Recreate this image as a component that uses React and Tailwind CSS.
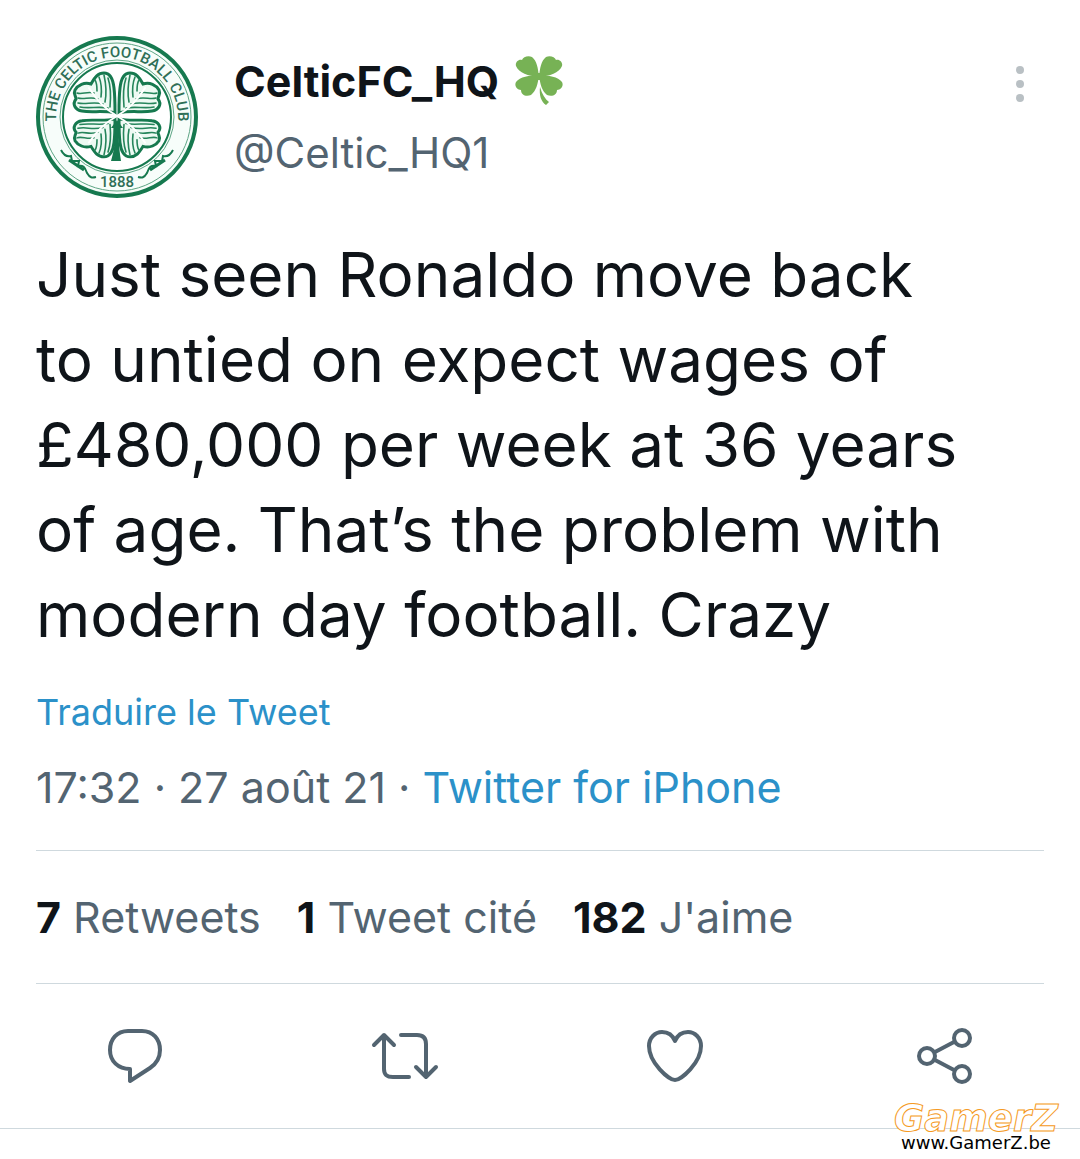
const INK = "#536471";

const stats = [
  { count: "7", label: "Retweets" },
  { count: "1", label: "Tweet cité" },
  { count: "182", label: "J'aime" },
];

function Leaf({ transform }) {
  return (
    <g transform={transform} strokeLinecap="round">
      <path
        d="M2 -3 C2 -12 2 -20 3 -28 C4 -37 7 -43 13 -43 C19 -43 22 -39 26 -32 C33 -34 39 -31 42 -26 C44 -22 41 -20 41 -17 C45 -12 42 -6 35 -5 C25 -3 14 -6 2 -3 Z"
        fill="#edfaf3"
        stroke="#16794f"
        strokeWidth="3"
      />
      <g fill="none" stroke="#25855b" strokeWidth="1.6">
        <path d="M7 -9 C6 -20 6 -29 9 -38" />
        <path d="M12 -14 C10 -24 11 -32 13 -41" />
        <path d="M16 -19 C15 -27 16 -34 18 -39" />
        <path d="M20 -25 C20 -30 20 -33 22 -36" />
        <path d="M9 -8 C19 -10 28 -7 37 -9" />
        <path d="M14 -12 C24 -15 31 -11 39 -13" />
        <path d="M19 -17 C27 -20 33 -16 39 -18" />
        <path d="M23 -23 C30 -25 35 -21 40 -23" />
      </g>
      <path d="M0 0 C12 -7 20 -15 28 -28" fill="none" stroke="#fff" strokeWidth="2" />
    </g>
  );
}

function Crest() {
  return (
    <svg viewBox="0 0 162 162" className="size-[162px] shrink-0" role="img" aria-label="Celtic crest">
      <circle cx="81" cy="81" r="79" fill="#f7fdfa" stroke="#16794f" strokeWidth="4" />
      <circle cx="81" cy="81" r="74" fill="none" stroke="#5ea585" strokeWidth="1" />
      <circle cx="81" cy="81" r="57" fill="none" stroke="#5ea585" strokeWidth="1" />
      <circle cx="81" cy="81" r="54" fill="#fff" stroke="#16794f" strokeWidth="2" />
      <path id="crest-top" d="M23 101 A61 61 0 1 1 139 101" fill="none" />
      <text fill="#2f6f57" fontFamily="Roboto, sans-serif" fontSize="15" fontWeight="500">
        <textPath href="#crest-top" startOffset="50%" textAnchor="middle">
          THE CELTIC FOOTBALL CLUB
        </textPath>
      </text>
      <text
        x="81"
        y="151"
        fill="#2f6f57"
        fontFamily="Roboto, sans-serif"
        fontSize="15"
        fontWeight="500"
        textAnchor="middle"
      >
        1888
      </text>
      <Leaf transform="translate(81 80)" />
      <Leaf transform="translate(81 80) scale(-1 1)" />
      <Leaf transform="translate(81 80) scale(1 -0.95)" />
      <Leaf transform="translate(81 80) scale(-1 -0.95)" />
      <path d="M79 88 C80 98 79 112 75 125 H85 C83 112 82 98 83 88 Z" fill="#16794f" />
      <path d="M75 92 L81 84 L87 92 Z" fill="#16794f" />
      <g fill="none" stroke="#16794f" strokeWidth="2">
        <path d="M25 114 C28 120 31 121 35 120 L36 125 L43 125 L42 130 C47 129 49 131 51 137 C54 142 56 142 60 141" />
        <path d="M137 114 C134 120 131 121 127 120 L126 125 L119 125 L120 130 C115 129 113 131 111 137 C108 142 106 142 102 141" />
        <path d="M33 124 L48 134 M129 124 L114 134" strokeWidth="3" />
      </g>
    </svg>
  );
}

function Clover() {
  return (
    <svg viewBox="0 0 48 50" className="h-[50px] w-12" role="img" aria-label="four leaf clover">
      <g fill="#77b255">
        <path d="M24 21 C23 12 22 5 17 1 C13 -1 8 1 7 4 C3 3 0 7 1 10 C4 17 13 20 24 21 Z" />
        <path d="M24 21 C25 12 26 5 31 1 C35 -1 40 1 41 4 C45 3 48 7 47 10 C44 17 35 20 24 21 Z" />
        <path d="M24 19 C14 19 5 21 1 26 C-1 30 2 34 6 34 C6 39 11 41 16 39 C21 35 23 28 24 19 Z" />
        <path d="M24 19 C34 19 43 21 47 26 C49 30 46 34 42 34 C42 39 37 41 32 39 C27 35 25 28 24 19 Z" />
        <path d="M20 17 H28 V24 H20 Z" />
      </g>
      <path d="M25 31 C27 38 30 43 34 46 L31 49 C26 46 24 39 25 31 Z" fill="#77b255" />
    </svg>
  );
}

function ActionButton({ label, children }) {
  return (
    <button type="button" aria-label={label} className="flex h-[72px] items-center justify-center">
      <svg
        viewBox="0 0 72 60"
        className="h-[60px] w-[72px]"
        fill="none"
        stroke={INK}
        strokeWidth="4"
        strokeLinecap="round"
        strokeLinejoin="round"
      >
        {children}
      </svg>
    </button>
  );
}

export default function App() {
  return (
    <main className="relative min-h-screen bg-white font-['Inter',sans-serif] text-[#0f1419]">
      <article className="border-b border-[#cfd9de]">
        <div className="px-9 pt-9">
          <header className="flex items-center">
            <Crest />
            <div className="ml-9 text-[42px] leading-[72px]">
              <h1 className="flex items-center gap-4 text-[43px] font-bold">
                CelticFC_HQ
                <Clover />
              </h1>
              <p className="text-[#536471]">@Celtic_HQ1</p>
            </div>
            <button type="button" aria-label="Plus" className="mr-5 mb-[66px] ml-auto flex flex-col gap-1.5">
              <span className="size-2 rounded-full bg-[#b9c0c4]" />
              <span className="size-2 rounded-full bg-[#b9c0c4]" />
              <span className="size-2 rounded-full bg-[#b9c0c4]" />
            </button>
          </header>

          <p className="mt-[34px] pr-[60px] text-[62px] leading-[85px]">
            Just seen Ronaldo move back to untied on expect wages of £480,000 per week at 36 years of age. That’s the
            problem with modern day football. Crazy
          </p>

          <a href="#translate" className="mt-7 block w-fit text-[36px] leading-[54px] text-[#2b91c9]">
            Traduire le Tweet
          </a>
          <p className="mt-5 text-[43px] leading-[56px] text-[#536471]">
            17:32 · 27 août 21 ·{" "}
            <a href="#source" className="text-[#2b91c9]">
              Twitter for iPhone
            </a>
          </p>

          <ul className="mt-[35px] flex gap-9 border-y border-[#cfd9de] py-[38px] text-[43px] leading-[56px]">
            {stats.map((stat) => (
              <li key={stat.label} className="text-[#536471]">
                <strong className="font-bold text-[#0f1419]">{stat.count}</strong> {stat.label}
              </li>
            ))}
          </ul>
        </div>

        <div className="grid grid-cols-4 pt-9 pb-9">
          <ActionButton label="Répondre">
            <path d="M29 5 H43 C54 5 61 13 61 24 C61 32 57 38 51 42 L31 55 V43 C19 43 11 35 11 24 C11 13 18 5 29 5 Z" />
          </ActionButton>
          <ActionButton label="Retweeter">
            <path d="M5 19 L15 9 L25 19 M15 9 V43 C15 49 18 51 24 51 H40" />
            <path d="M32 9 H48 C54 9 57 12 57 18 V51 M47 41 L57 51 L67 41" />
          </ActionButton>
          <ActionButton label="J'aime">
            <path d="M36 54 C30 54 10 37 10 20 C10 12 16 6 23 6 C30 6 34 10 36 15 C38 10 42 6 49 6 C56 6 62 12 62 20 C62 37 42 54 36 54 Z" />
          </ActionButton>
          <ActionButton label="Partager">
            <circle cx="18" cy="30" r="8" />
            <circle cx="53" cy="12" r="8" />
            <circle cx="53" cy="48" r="8" />
            <path d="M26 26 L45 16 M26 34 L45 44" />
          </ActionButton>
        </div>
      </article>

      <div className="absolute right-5 bottom-1.5 flex flex-col items-center font-['DejaVu_Sans',sans-serif]">
        <svg viewBox="0 0 168 32" className="h-8 w-[168px] overflow-visible">
          <text
            x="84"
            y="30"
            textAnchor="middle"
            fontSize="37"
            fontWeight="bold"
            fontStyle="italic"
            fill="#fff"
            stroke="#f59a23"
            strokeWidth="1"
          >
            GamerZ
          </text>
        </svg>
        <span className="text-lg leading-5 text-black">www.GamerZ.be</span>
      </div>
    </main>
  );
}
